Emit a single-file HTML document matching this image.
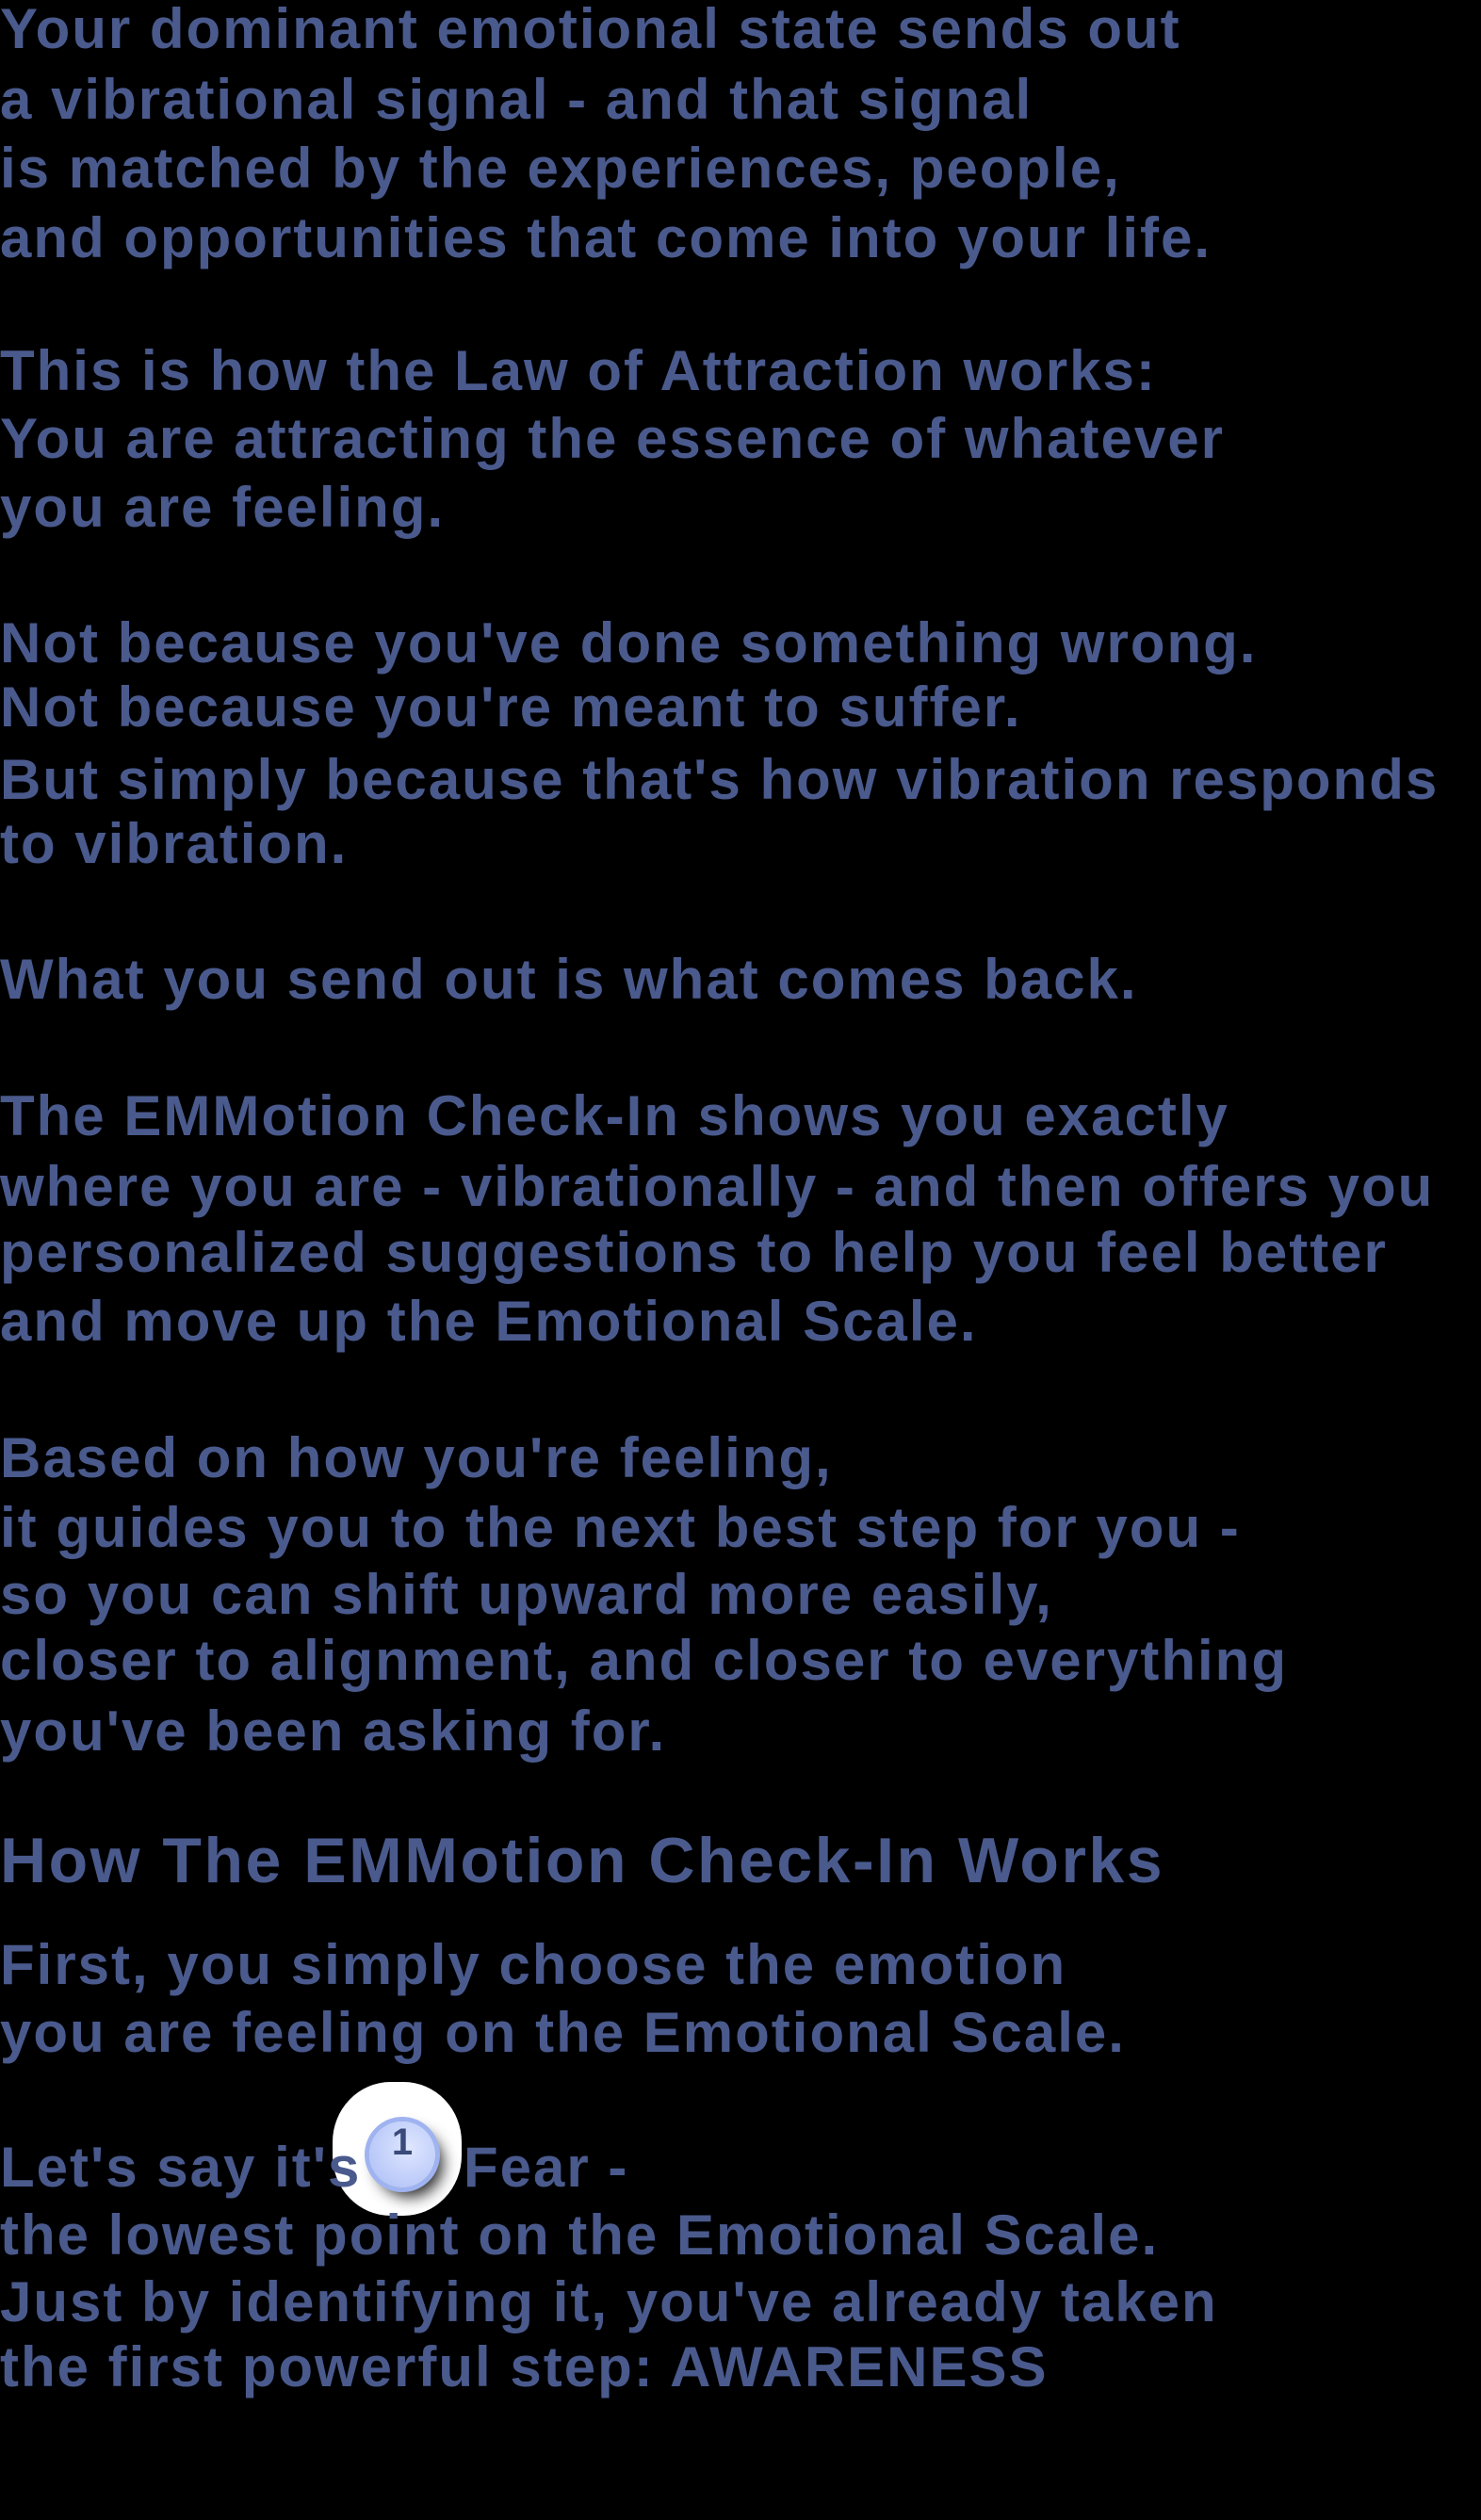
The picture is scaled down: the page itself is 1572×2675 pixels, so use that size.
<!DOCTYPE html>
<html><head><meta charset="utf-8"><style>
html,body{margin:0;padding:0;background:#000;}
body{width:1572px;height:2675px;position:relative;overflow:hidden;font-family:"Liberation Sans",sans-serif;}
.l{position:absolute;left:0;height:72px;line-height:72px;font-size:60px;font-weight:bold;color:#4a5a8d;white-space:nowrap;letter-spacing:2px;}
.h{font-size:68px;letter-spacing:2.5px;}
.blob{position:absolute;left:353px;top:2210px;width:137px;height:142px;background:#fff;border-radius:45%;}
.badge{position:absolute;left:392px;top:2252px;width:70px;height:70px;border-radius:50%;background:radial-gradient(circle at 60% 40%,#dfe6ff,#a9bcf5);box-shadow:0 0 0 5px #9fb3f0,8px 10px 16px rgba(0,0,0,.85);text-align:center;line-height:70px;font:bold 40px "Liberation Sans",sans-serif;color:#3a4a7a;}
</style></head><body>
<div class="l" style="top:-5px">Your dominant emotional state sends out</div>
<div class="l" style="top:70px">a vibrational signal - and that signal</div>
<div class="l" style="top:143px">is matched by the experiences, people,</div>
<div class="l" style="top:217px">and opportunities that come into your life.</div>
<div class="l" style="top:358px">This is how the Law of Attraction works:</div>
<div class="l" style="top:430px">You are attracting the essence of whatever</div>
<div class="l" style="top:503px">you are feeling.</div>
<div class="l" style="top:647px">Not because you've done something wrong.</div>
<div class="l" style="top:715px">Not because you're meant to suffer.</div>
<div class="l" style="top:792px">But simply because that's how vibration responds</div>
<div class="l" style="top:860px">to vibration.</div>
<div class="l" style="top:1004px">What you send out is what comes back.</div>
<div class="l" style="top:1149px">The EMMotion Check-In shows you exactly</div>
<div class="l" style="top:1224px">where you are - vibrationally - and then offers you</div>
<div class="l" style="top:1294px">personalized suggestions to help you feel better</div>
<div class="l" style="top:1367px">and move up the Emotional Scale.</div>
<div class="l" style="top:1512px">Based on how you're feeling,</div>
<div class="l" style="top:1586px">it guides you to the next best step for you -</div>
<div class="l" style="top:1657px">so you can shift upward more easily,</div>
<div class="l" style="top:1727px">closer to alignment, and closer to everything</div>
<div class="l" style="top:1802px">you've been asking for.</div>
<div class="l h" style="top:1939px">How The EMMotion Check-In Works</div>
<div class="l" style="top:2050px">First, you simply choose the emotion</div>
<div class="l" style="top:2122px">you are feeling on the Emotional Scale.</div>
<div class="blob"></div>
<div class="l" style="top:2265px">Let's say it's</div>
<div class="badge">1</div>
<div class="l" style="top:2265px;left:492px">Fear -</div>
<div class="l" style="top:2337px">the lowest point on the Emotional Scale.</div>
<div class="l" style="top:2408px">Just by identifying it, you've already taken</div>
<div class="l" style="top:2477px">the first powerful step: AWARENESS</div>
</body></html>
